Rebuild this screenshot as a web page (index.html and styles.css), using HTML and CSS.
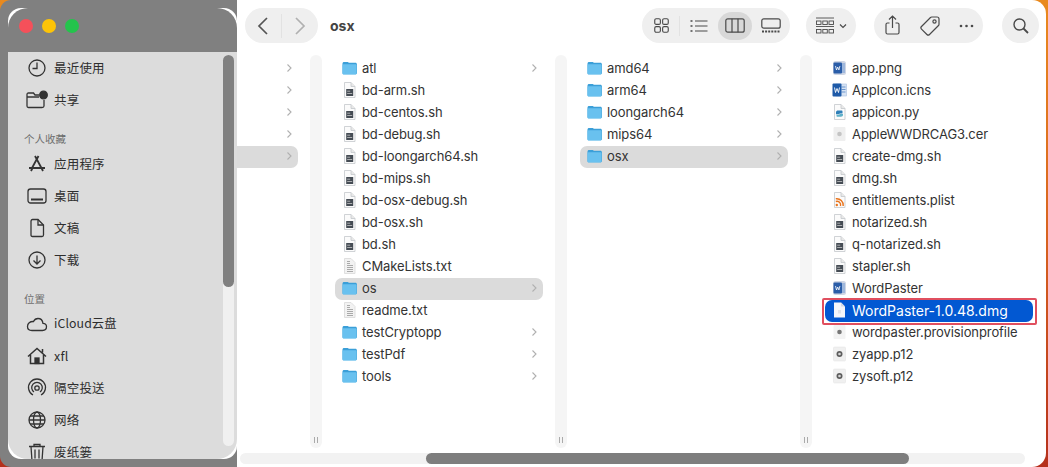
FILE: index.html
```html
<!DOCTYPE html>
<html lang="zh">
<head>
<meta charset="utf-8">
<title>osx</title>
<link rel="stylesheet" href="styles.css">
</head>
<body>
<svg class="defs" aria-hidden="true">
  <symbol id="folder" viewBox="0 0 15 15">
    <path d="M0.5 3.2c0-1 .6-1.7 1.6-1.7h3.2c.7 0 1 .6 1.7.8h6.4c.9 0 1.5.6 1.5 1.5v8.6c0 .9-.6 1.4-1.5 1.4H2c-1 0-1.500-.5-1.500-1.400z" fill="#3b9fd8"/>
    <path d="M0.500 4.600c0-.5.400-.8.900-.8h12.200c.5 0 .9.300.9.800v8.200c0 .8-.6 1.300-1.400 1.300H1.900c-.8 0-1.400-.5-1.400-1.300z" fill="#69c1ef"/>
  </symbol>
  <symbol id="page" viewBox="0 0 15 16">
    <path d="M2.500 .5h6.500l4 4v11h-10.500z" fill="#fbfbfb" stroke="#c4c8cc" stroke-width=".8"/>
    <path d="M9 .5v4h4" fill="#e8e8e8" stroke="#c4c8cc" stroke-width=".8"/>
  </symbol>
  <symbol id="sh" viewBox="0 0 15 16">
    <use href="#page"/>
    <rect x="4.200" y="7" width="7" height="7" fill="#454c54"/>
    <path d="M5.200 9.200h3M5.200 11.500h5" stroke="#d8d8d8" stroke-width=".7"/>
  </symbol>
  <symbol id="txt" viewBox="0 0 15 16">
    <path d="M2.500 .5h6.500l4 4v11h-10.500z" fill="#f2f2f2" stroke="#d8d8d8" stroke-width=".8"/>
    <path d="M5 3.500h3M5 5.500h3M5 7.500h6M5 9.500h6M5 11.500h6M5 13.500h6" stroke="#a9a9a9" stroke-width="1"/>
  </symbol>
  <symbol id="word" viewBox="0 0 15 16">
    <rect x="4" y="2" width="10.500" height="12" fill="#d7e3f3" stroke="#a8c0e0" stroke-width=".6"/>
    <path d="M9.500 5h4M9.500 7.500h4M9.500 10h4" stroke="#6b95cd"/>
    <rect x=".5" y="1.500" width="9" height="13" rx="1" fill="#1e5aa8"/>
    <path d="M2.500 5.500l1 5 1.500-4 1.500 4 1-5" fill="none" stroke="#fff" stroke-width=".9"/>
  </symbol>
  <symbol id="appicon" viewBox="0 0 15 16">
    <rect x="1" y="1" width="13" height="14" rx="2.500" fill="#cfd6e4"/>
    <rect x="7" y="3" width="6" height="10" fill="#9eb7dc"/>
    <rect x="1.500" y="2.500" width="8.500" height="11" rx="1" fill="#2a5da8"/>
    <path d="M3.500 6l1 4 1.200-3 1.200 3 1-4" fill="none" stroke="#fff" stroke-width=".8"/>
  </symbol>
  <symbol id="py" viewBox="0 0 15 16">
    <use href="#page"/>
    <path d="M4 9.500V8.200C4 7 5 6.500 6 6.500h3.500c.8 0 1 .5 1 1v2H7.500v.8H4z" fill="#2f7fb8"/>
    <path d="M11 9.500v1.500c0 1.200-1 1.700-2 1.700H5.500c-.8 0-1-.5-1-1v-1h3v-.7H11z" fill="#5fb0c8"/>
  </symbol>
  <symbol id="cer" viewBox="0 0 15 16">
    <rect x="1.500" y="1" width="12" height="14" rx="1" fill="#efefef"/>
    <circle cx="7.500" cy="8" r="2.300" fill="#c4c4c4"/>
  </symbol>
  <symbol id="rss" viewBox="0 0 15 16">
    <use href="#page"/>
    <circle cx="4.800" cy="13" r="1.200" fill="#e9741c"/>
    <path d="M3.800 9.500a3.700 3.700 0 0 1 4.700 4.500M3.800 6.800a6.500 6.500 0 0 1 7.400 7.200" fill="none" stroke="#e9741c" stroke-width="1.400"/>
  </symbol>
  <symbol id="dmg" viewBox="0 0 15 16">
    <path d="M2 .5h7l4 4v11h-11z" fill="#f4f6fa"/>
    <path d="M9 .5v4h4" fill="#d5dbe6"/>
    <rect x="6" y="8" width="3" height="3.500" fill="#dfe3ea"/>
  </symbol>
  <symbol id="prov" viewBox="0 0 15 16">
    <rect x="1.500" y="1" width="12" height="14" rx="1" fill="#f3f3f3"/>
    <circle cx="7.500" cy="8" r="2.300" fill="#777"/>
  </symbol>
  <symbol id="p12" viewBox="0 0 15 16">
    <rect x="1.500" y="1" width="12" height="14" rx="1" fill="#f0f0f0" stroke="#e0e0e0" stroke-width=".5"/>
    <circle cx="7.500" cy="8" r="3" fill="#5e5e5e"/>
    <circle cx="7.500" cy="8" r="1.300" fill="#d8d8d8"/>
  </symbol>
  <symbol id="chev" viewBox="0 0 6 10">
    <path d="M1.500 1.500L5 5 1.500 8.500" fill="none" stroke="#b0b0b0" stroke-width="1.100"/>
  </symbol>
</svg>

<div class="desktop">
  <aside class="side-shell">
    <div class="sidebar">
      <header class="titlebar">
        <span class="light red"></span>
        <span class="light yellow"></span>
        <span class="light green"></span>
      </header>
      <nav class="side-list">
        <div class="side-row"><svg class="side-icon" viewBox="0 0 20 20"><circle cx="10" cy="10" r="8"/><path d="M10 4.500V10.500H5.500"/></svg>最近使用</div>
        <div class="side-row"><svg class="side-icon" viewBox="0 0 22 20"><path d="M13 5H9L7.500 3H2.500C1.500 3 1 3.500 1 4.500V16C1 17 1.500 17.500 2.500 17.500H16C17 17.500 18 17 18 16V10"/><path d="M1 7H13"/><circle cx="17.500" cy="5" r="3.800" fill="#333"/></svg>共享</div>
        <div class="side-head">个人收藏</div>
        <div class="side-row"><svg class="side-icon" viewBox="0 0 20 20"><path d="M11.500 2L5 14M8 2l7 13M2 14h16M4 17l1.500-3M16 17l-1.500-3" stroke-width="1.800"/></svg>应用程序</div>
        <div class="side-row"><svg class="side-icon" viewBox="0 0 20 20"><rect x="1" y="3" width="18" height="14" rx="2.500"/><path d="M4 13.500h12" stroke-width="2.200"/></svg>桌面</div>
        <div class="side-row"><svg class="side-icon" viewBox="0 0 20 20"><path d="M4 3.500C4 2.500 4.500 1.500 5.500 1.500H11L16.500 7V17C16.500 18 16 18.500 15 18.500H5.500C4.500 18.500 4 18 4 17Z"/><path d="M11 1.500V7H16.500"/></svg>文稿</div>
        <div class="side-row"><svg class="side-icon" viewBox="0 0 20 20"><circle cx="10" cy="10" r="8"/><path d="M10 5.500V14M6.500 10.500L10 14l3.500-3.500"/></svg>下载</div>
        <div class="side-head">位置</div>
        <div class="side-row tight"><svg class="side-icon" viewBox="0 0 22 20"><path d="M6 16.500H16.500C19 16.500 20.500 15 20.500 12.800 20.500 10.700 19 9.300 17 9.300 16.500 6 14.500 4.500 12 4.500 9.800 4.500 8.300 5.800 7.500 7.500 4 7.300 1.500 9.500 1.500 12.500 1.500 15 3.300 16.500 6 16.500Z"/></svg>iCloud云盘</div>
        <div class="side-row"><svg class="side-icon" viewBox="0 0 20 20"><path d="M1 10.500L10 2.500l9 8M3.500 9V17.500H16.500V9M15.500 3V6.500" stroke-width="1.500"/><rect x="8" y="12" width="4" height="5.500" fill="#333"/></svg>xfl</div>
        <div class="side-row"><svg class="side-icon" viewBox="0 0 20 20"><path d="M6 17A8.500 8.500 0 1 1 14 17"/><path d="M7 14A5.300 5.300 0 1 1 13 14"/><circle cx="10" cy="10" r="2.200"/></svg>隔空投送</div>
        <div class="side-row"><svg class="side-icon" viewBox="0 0 20 20"><circle cx="10" cy="10" r="8"/><ellipse cx="10" cy="10" rx="3.500" ry="8"/><path d="M3 6h14M2 10h16M3 14h14"/></svg>网络</div>
        <div class="side-row"><svg class="side-icon" viewBox="0 0 20 20"><path d="M2 4.500h16M7 4.500V2.500h6v2M4 4.500L5 19h10l1-14.500M8 7.500V16.500M12 7.500V16.500"/></svg>废纸篓</div>
      </nav>
      <div class="side-track"><div class="side-thumb"></div></div>
    </div>
  </aside>

  <main class="main">
    <header class="toolbar">
      <div class="pill nav-pill">
        <svg class="tb-nav" viewBox="0 0 14 20"><path d="M11 2L3 10l8 8"/></svg>
        <span class="divider"></span>
        <svg class="tb-nav faded" viewBox="0 0 14 20"><path d="M3 2l8 8-8 8"/></svg>
      </div>
      <h1 class="path-title">osx</h1>
      <div class="pill view-pill">
        <svg class="tb grid-i" viewBox="0 0 16 16"><rect x=".8" y=".8" width="6" height="6" rx="1.500"/><rect x="9.200" y=".8" width="6" height="6" rx="1.500"/><rect x=".8" y="9.200" width="6" height="6" rx="1.500"/><rect x="9.200" y="9.200" width="6" height="6" rx="1.500"/></svg>
        <span class="divider short"></span>
        <svg class="tb list-i" viewBox="0 0 18 14"><path d="M5 2h12.500M5 7h12.500M5 12h12.500"/><path d="M.5 2h2M.5 7h2M.5 12h2" stroke-width="1.600"/></svg>
        <span class="view-sel"><svg class="tb col-i" viewBox="0 0 20 15"><rect x=".8" y=".8" width="18.400" height="13.400" rx="2"/><path d="M7 .8v13.400M13 .8v13.400"/></svg></span>
        <svg class="tb gal-i" viewBox="0 0 20 15"><rect x=".8" y=".8" width="18.400" height="9.400" rx="2"/><path d="M1 13.500h18" stroke-width="1.800" stroke-dasharray="2 1.100"/></svg>
      </div>
      <div class="pill group-pill">
        <svg class="tb group-i" viewBox="0 0 18 18"><path d="M0 1h18M0 9.500h18" stroke-width=".9"/><rect x=".5" y="4" width="4.500" height="3.500"/><rect x="6.800" y="4" width="4.500" height="3.500"/><rect x="13" y="4" width="4.500" height="3.500"/><rect x=".5" y="12.500" width="4.500" height="3.500"/><rect x="6.800" y="12.500" width="4.500" height="3.500"/><rect x="13" y="12.500" width="4.500" height="3.500"/></svg>
        <svg class="tb drop-i" viewBox="0 0 8 6"><path d="M1 1.500L4 4.500l3-3" stroke-width="1.200"/></svg>
      </div>
      <div class="pill act-pill">
        <svg class="tb share-i" viewBox="0 0 15 20"><path d="M4.500 8H2.500C1.500 8 1 8.500 1 9.500v8C1 18.500 1.500 19 2.500 19h10c1 0 1.500-.5 1.500-1.500v-8c0-1-.5-1.500-1.500-1.500H10.500M7.500 13V1.500M4 4.500L7.500 1 11 4.500"/></svg>
        <svg class="tb tag-i" viewBox="0 0 20 20"><path d="M1.500 10.500L10.500 1.500c.3-.3.700-.5 1.200-.5H17c1.100 0 2 .9 2 2V8.300c0 .5-.2.900-.5 1.200L9.500 18.500c-.8.800-1.800.8-2.600 0L1.500 13.100c-.8-.8-.8-1.800 0-2.600Z"/><circle cx="14.500" cy="5.500" r="1.600"/></svg>
        <svg class="tb dots-i" viewBox="0 0 15 4"><circle cx="2" cy="2" r="1.300"/><circle cx="7.500" cy="2" r="1.300"/><circle cx="13" cy="2" r="1.300"/></svg>
      </div>
      <div class="pill search-pill">
        <svg class="tb search-i" viewBox="0 0 16 16"><circle cx="6.500" cy="6.500" r="5.500"/><path d="M10.500 10.500L15 15" stroke-width="1.800"/></svg>
      </div>
    </header>

    <div class="browser">
      <section class="col col-first">
        <div class="rows">
          <div class="row"><svg class="chev"><use href="#chev"/></svg></div>
          <div class="row"><svg class="chev"><use href="#chev"/></svg></div>
          <div class="row"><svg class="chev"><use href="#chev"/></svg></div>
          <div class="row"><svg class="chev"><use href="#chev"/></svg></div>
          <div class="row open"><svg class="chev"><use href="#chev"/></svg></div>
        </div>
        <div class="strip"><span class="grip"></span></div>
      </section>

      <section class="col">
        <div class="rows">
          <div class="row"><svg class="ic"><use href="#folder"/></svg><span class="name">atl</span><svg class="chev"><use href="#chev"/></svg></div>
          <div class="row"><svg class="ic"><use href="#sh"/></svg><span class="name">bd-arm.sh</span></div>
          <div class="row"><svg class="ic"><use href="#sh"/></svg><span class="name">bd-centos.sh</span></div>
          <div class="row"><svg class="ic"><use href="#sh"/></svg><span class="name">bd-debug.sh</span></div>
          <div class="row"><svg class="ic"><use href="#sh"/></svg><span class="name">bd-loongarch64.sh</span></div>
          <div class="row"><svg class="ic"><use href="#sh"/></svg><span class="name">bd-mips.sh</span></div>
          <div class="row"><svg class="ic"><use href="#sh"/></svg><span class="name">bd-osx-debug.sh</span></div>
          <div class="row"><svg class="ic"><use href="#sh"/></svg><span class="name">bd-osx.sh</span></div>
          <div class="row"><svg class="ic"><use href="#sh"/></svg><span class="name">bd.sh</span></div>
          <div class="row"><svg class="ic"><use href="#txt"/></svg><span class="name">CMakeLists.txt</span></div>
          <div class="row open"><svg class="ic"><use href="#folder"/></svg><span class="name">os</span><svg class="chev"><use href="#chev"/></svg></div>
          <div class="row"><svg class="ic"><use href="#txt"/></svg><span class="name">readme.txt</span></div>
          <div class="row"><svg class="ic"><use href="#folder"/></svg><span class="name">testCryptopp</span><svg class="chev"><use href="#chev"/></svg></div>
          <div class="row"><svg class="ic"><use href="#folder"/></svg><span class="name">testPdf</span><svg class="chev"><use href="#chev"/></svg></div>
          <div class="row"><svg class="ic"><use href="#folder"/></svg><span class="name">tools</span><svg class="chev"><use href="#chev"/></svg></div>
        </div>
        <div class="strip"><span class="grip"></span></div>
      </section>

      <section class="col">
        <div class="rows">
          <div class="row"><svg class="ic"><use href="#folder"/></svg><span class="name">amd64</span><svg class="chev"><use href="#chev"/></svg></div>
          <div class="row"><svg class="ic"><use href="#folder"/></svg><span class="name">arm64</span><svg class="chev"><use href="#chev"/></svg></div>
          <div class="row"><svg class="ic"><use href="#folder"/></svg><span class="name">loongarch64</span><svg class="chev"><use href="#chev"/></svg></div>
          <div class="row"><svg class="ic"><use href="#folder"/></svg><span class="name">mips64</span><svg class="chev"><use href="#chev"/></svg></div>
          <div class="row open"><svg class="ic"><use href="#folder"/></svg><span class="name">osx</span><svg class="chev"><use href="#chev"/></svg></div>
        </div>
        <div class="strip"><span class="grip"></span></div>
      </section>

      <section class="col col-last">
        <div class="rows">
          <div class="row"><svg class="ic"><use href="#appicon"/></svg><span class="name">app.png</span></div>
          <div class="row"><svg class="ic"><use href="#word"/></svg><span class="name">AppIcon.icns</span></div>
          <div class="row"><svg class="ic"><use href="#py"/></svg><span class="name">appicon.py</span></div>
          <div class="row"><svg class="ic"><use href="#cer"/></svg><span class="name">AppleWWDRCAG3.cer</span></div>
          <div class="row"><svg class="ic"><use href="#sh"/></svg><span class="name">create-dmg.sh</span></div>
          <div class="row"><svg class="ic"><use href="#sh"/></svg><span class="name">dmg.sh</span></div>
          <div class="row"><svg class="ic"><use href="#rss"/></svg><span class="name">entitlements.plist</span></div>
          <div class="row"><svg class="ic"><use href="#sh"/></svg><span class="name">notarized.sh</span></div>
          <div class="row"><svg class="ic"><use href="#sh"/></svg><span class="name">q-notarized.sh</span></div>
          <div class="row"><svg class="ic"><use href="#sh"/></svg><span class="name">stapler.sh</span></div>
          <div class="row"><svg class="ic"><use href="#appicon"/></svg><span class="name">WordPaster</span></div>
          <div class="row selected"><svg class="ic"><use href="#dmg"/></svg><span class="name">WordPaster-1.0.48.dmg</span></div>
          <div class="row"><svg class="ic"><use href="#prov"/></svg><span class="name">wordpaster.provisionprofile</span></div>
          <div class="row"><svg class="ic"><use href="#p12"/></svg><span class="name">zyapp.p12</span></div>
          <div class="row"><svg class="ic"><use href="#p12"/></svg><span class="name">zysoft.p12</span></div>
        </div>
      </section>
    </div>

    <div class="hbar"><div class="hthumb"></div></div>
  </main>
</div>
</body>
</html>
```
FILE: styles.css
```css
* { box-sizing: border-box; }
html, body { margin: 0; padding: 0; width: 1048px; height: 467px; overflow: hidden; }
body { font-family: Inter, "Noto Sans CJK SC", sans-serif; font-size: 13px; color: #333; }
.defs { display: block; width: 0; height: 0; position: absolute; }

.desktop {
  display: flex;
  width: 1048px;
  height: 467px;
  background: linear-gradient(180deg, #e98a1e 0%, #d8631f 50%, #b5301c 100%);
}

/* left: sidebar */
.side-shell {
  width: 237px;
  height: 467px;
  flex: none;
  background: #808080;
  border-radius: 11px 0 0 11px;
  padding: 8px 0 8px 8px;
}
.sidebar {
  position: relative;
  display: flex;
  flex-direction: column;
  height: 100%;
  background: #fff;
  border-radius: 13px;
  overflow: hidden;
}
.titlebar {
  height: 44px;
  flex: none;
  display: flex;
  align-items: center;
  gap: 9px;
  padding: 0 0 8px 11px;
  background: #808080;
  border-radius: 20px 20px 0 0;
}
.light { width: 14px; height: 14px; border-radius: 50%; }
.red { background: #f5505a; }
.yellow { background: #fdc407; }
.green { background: #24c44c; }

.side-list {
  flex: 1;
  min-height: 0;
  overflow: hidden;
  background: #dcdcdc;
  border-radius: 0 0 20px 20px;
  color: #2e2e2e;
}
.side-row {
  display: flex;
  align-items: center;
  height: 32px;
  padding: 0 0 2px 46px;
  position: relative;
  font-family: "Noto Sans CJK SC", Inter, sans-serif;
  font-size: 12.500px;
  letter-spacing: .2px;
}
.side-row.tight { font-size: 12.300px; letter-spacing: .1px; }
.side-icon {
  position: absolute;
  left: 18px;
  top: 6px;
  width: 22px;
  height: 20px;
  fill: none;
  stroke: #333;
  stroke-width: 1.300;
}
.side-head {
  height: 32px;
  padding: 14px 0 0 16px;
  line-height: 18px;
  font-family: "Noto Sans CJK SC", sans-serif;
  font-size: 10.500px;
  color: #6e6e6e;
}
.side-track {
  position: absolute;
  left: 215px;
  top: 47px;
  width: 11px;
  height: 391px;
  border-radius: 6px;
  background: #f0f0f0;
}
.side-thumb {
  height: 232px;
  border-radius: 6px;
  background: #808080;
}

/* right: browser */
.main {
  flex: 1;
  min-width: 0;
  margin-right: 2px;
  display: flex;
  flex-direction: column;
  background: #fff;
  border-radius: 0 14px 14px 0;
}
.toolbar {
  display: flex;
  align-items: flex-start;
  height: 52px;
  flex: none;
  padding: 8px 7px 0 8px;
}
.pill {
  display: flex;
  align-items: center;
  height: 35px;
  border-radius: 18px;
  background: #efefef;
  flex: none;
}
.nav-pill { width: 73px; justify-content: space-around; padding: 0 6px; }
.tb-nav { width: 14px; height: 20px; fill: none; stroke: #555; stroke-width: 1.700; }
.tb-nav.faded { stroke: #b0b0b0; }
.divider { width: 1px; height: 24px; background: #e2e2e2; }
.path-title { margin: 0 0 0 12px; font-size: 14px; line-height: 36px; font-weight: 700; color: #444; }

.tb { fill: none; stroke: #4a4a4a; stroke-width: 1.200; flex: none; }
.view-pill { margin-left: auto; width: 148px; padding-left: 12px; }
.grid-i { width: 15px; height: 15px; }
.divider.short { margin-left: 10px; height: 20px; }
.list-i { width: 18px; height: 14px; margin-left: 10px; }
.view-sel {
  display: flex;
  align-items: center;
  justify-content: center;
  width: 34px;
  height: 28px;
  margin-left: 10px;
  border-radius: 14px;
  background: #d8d8d8;
}
.col-i { width: 20px; height: 15px; }
.gal-i { width: 20px; height: 15px; margin-left: 9px; }

.group-pill { width: 50px; margin-left: 16px; padding-left: 10px; }
.group-i { width: 18px; height: 18px; stroke-width: .9; }
.drop-i { width: 8px; height: 6px; margin-left: 5px; }

.act-pill { width: 109px; margin-left: 18px; padding-left: 11px; }
.share-i { width: 15px; height: 20px; margin-top: -1px; }
.tag-i { width: 20px; height: 20px; margin-left: 20px; }
.dots-i { width: 15px; height: 4px; margin-left: 19px; fill: #4a4a4a; stroke: none; }

.search-pill { width: 37px; margin-left: 19px; justify-content: center; }
.search-i { width: 16px; height: 16px; stroke-width: 1.400; }

.browser {
  display: flex;
  flex: 1;
  min-height: 0;
}
.col {
  display: flex;
  width: 245px;
  flex: none;
  padding-left: 13px;
}
.col-first { width: 85px; padding-left: 0; }
.col-last { flex: 1; width: auto; }
.rows {
  flex: 1;
  padding-top: 6px;
  margin-right: 12px;
}
.row {
  position: relative;
  display: flex;
  align-items: center;
  height: 22px;
  width: 208px;
  padding: 0 6px 2px 7px;
  border-radius: 7px;
}
.col-first .row { width: 61px; border-radius: 0 7px 7px 0; justify-content: flex-end; }
.ic { width: 15px; height: 16px; flex: none; }
.name { margin-left: 5px; white-space: nowrap; color: #333; letter-spacing: -.09px; }
.chev { width: 6px; height: 10px; margin-left: auto; flex: none; }
.open { background: #dbdbdb; }
.selected { background: #0258d2; }
.selected::after {
  content: "";
  position: absolute;
  inset: -2px -4px -3px -3px;
  border: 2px solid #e04f5f;
  border-radius: 2px;
}
.selected .name { color: #fff; font-size: 14px; letter-spacing: 0; }

.strip {
  position: relative;
  width: 12px;
  flex: none;
  margin: 3px 0 5px;
  border-radius: 6px;
  background: #f5f5f5;
}
.grip {
  position: absolute;
  left: 4px;
  bottom: 5px;
  width: 4px;
  height: 6px;
  border-left: 1px solid #aaa;
  border-right: 1px solid #aaa;
}

.hbar {
  flex: none;
  width: 785px;
  height: 11px;
  margin: 0 0 3px 3px;
  padding-left: 186px;
  border-radius: 6px;
  background: #f2f2f2;
}
.hthumb {
  width: 483px;
  height: 11px;
  border-radius: 6px;
  background: #7e7e7e;
}
```
